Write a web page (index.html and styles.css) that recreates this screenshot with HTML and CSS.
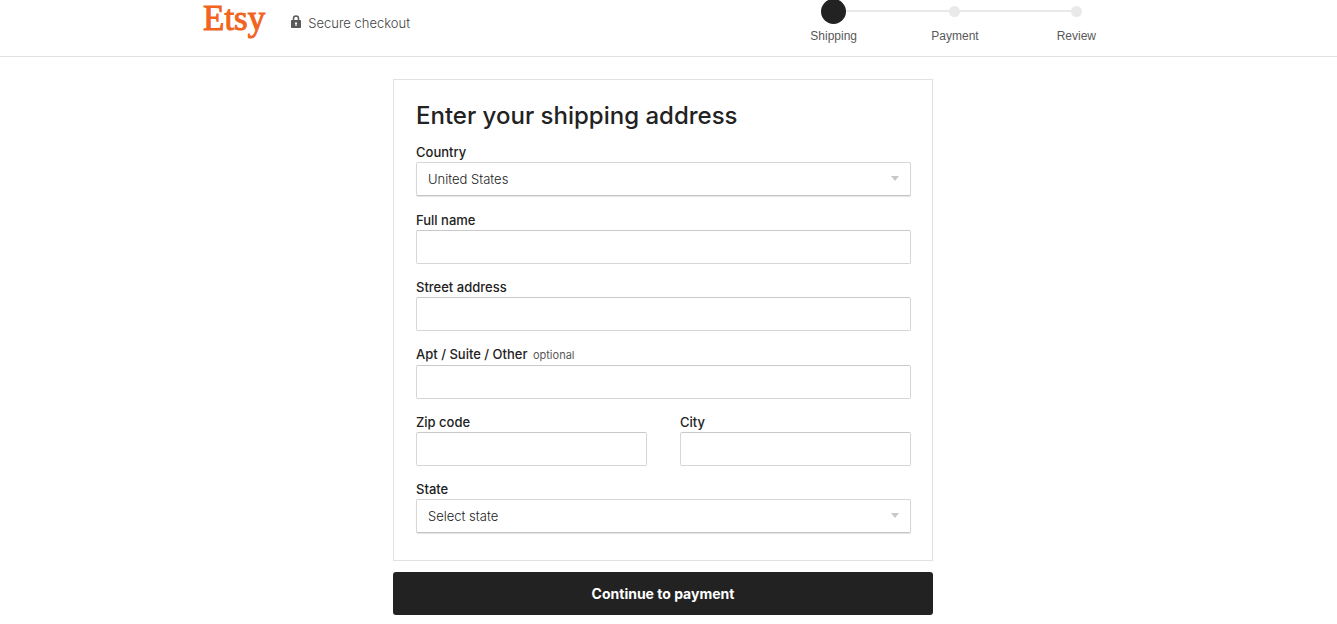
FILE: index.html
```html
<!DOCTYPE html>
<html lang="en">
<head>
    <meta charset="UTF-8">
    <meta name="viewport" content="width=device-width, initial-scale=1.0">
    <title>Etsy - Secure checkout</title>
    <link rel="stylesheet" href="styles.css">
</head>
<body>

<header class="site-header">
    <div class="header-inner">
        <a href="#" class="logo">Etsy</a>
        <div class="secure">
            <svg class="lock" width="10" height="13" viewBox="0 0 10 13" aria-hidden="true">
                <path d="M2.5 6V3.4a2.5 2.5 0 0 1 5 0V6" fill="none" stroke="#595959" stroke-width="1.5"/>
                <path fill="#595959" fill-rule="evenodd" d="M.8 5h8.4a.8.8 0 0 1 .8.8v6.4a.8.8 0 0 1-.8.8H.8a.8.8 0 0 1-.8-.8V5.8A.8.8 0 0 1 .8 5zM5 7.2a1.1 1.1 0 0 0-.6 2V11h1.2V9.2a1.1 1.1 0 0 0-.6-2z"/>
            </svg>
            <span>Secure checkout</span>
        </div>
        <ol class="steps">
            <li class="step active"><span class="dot"></span>Shipping</li>
            <li class="step"><span class="dot"></span>Payment</li>
            <li class="step"><span class="dot"></span>Review</li>
        </ol>
    </div>
</header>

<main class="checkout">
    <form>
        <div class="card">
            <h1>Enter your shipping address</h1>
            <div class="field">
                <label for="country">Country</label>
                <div class="select-wrap">
                    <select id="country">
                        <option>United States</option>
                    </select>
                </div>
            </div>
            <div class="field">
                <label for="name">Full name</label>
                <input type="text" id="name">
            </div>
            <div class="field">
                <label for="street">Street address</label>
                <input type="text" id="street">
            </div>
            <div class="field">
                <label for="apt">Apt / Suite / Other <span class="optional">optional</span></label>
                <input type="text" id="apt">
            </div>
            <div class="field-row">
                <div class="field">
                    <label for="zip">Zip code</label>
                    <input type="text" id="zip">
                </div>
                <div class="field">
                    <label for="city">City</label>
                    <input type="text" id="city">
                </div>
            </div>
            <div class="field">
                <label for="state">State</label>
                <div class="select-wrap">
                    <select id="state">
                        <option>Select state</option>
                    </select>
                </div>
            </div>
        </div>
        <button type="submit">Continue to payment</button>
    </form>
</main>

</body>
</html>
```
FILE: styles.css
```css
* {
    box-sizing: border-box;
}
body {
    margin: 0;
    font-family: Inter, Arial, sans-serif;
    font-size: 13px;
    color: #222;
    background-color: #fff;
}
.site-header {
    border-bottom: 1px solid #e1e1df;
    padding-right: 11px;
}
.header-inner {
    display: flex;
    align-items: flex-start;
    max-width: 948px;
    height: 56px;
    margin: 0 auto;
    padding-left: 14px;
}
.logo {
    font-family: "Liberation Serif", Georgia, serif;
    font-size: 35px;
    line-height: 38px;
    color: #f1641e;
    -webkit-text-stroke: 1px #f1641e;
    text-decoration: none;
}
.secure {
    display: flex;
    align-items: center;
    gap: 7px;
    height: 45px;
    margin-left: 26px;
    font-weight: 300;
    color: #444;
}
.lock {
    margin-bottom: 3px;
}
.steps {
    display: flex;
    width: 364px;
    margin: 0 0 0 auto;
    padding: 0;
    list-style: none;
    font-family: "Liberation Sans", Arial, sans-serif;
    font-size: 12px;
    line-height: 16px;
    color: #595959;
}
.step {
    flex: 1;
    display: flex;
    flex-direction: column;
    align-items: center;
    position: relative;
}
.dot {
    width: 11px;
    height: 11px;
    margin: 6px 0 11px;
    border-radius: 50%;
    background-color: #e9e9e9;
}
.active .dot {
    width: 25px;
    height: 25px;
    margin: -1px 0 4px;
    background-color: #222;
    z-index: 1;
}
.step + .step::before {
    content: "";
    position: absolute;
    top: 10px;
    right: 50%;
    width: 100%;
    height: 2px;
    background-color: #e9e9e9;
}
.checkout {
    padding: 22px 11px 9px 0;
}
form {
    max-width: 540px;
    margin: 0 auto;
}
.card {
    border: 1px solid #e1e1df;
    padding: 21px 21px 11px 22px;
}
h1 {
    margin: 0 0 13px;
    font-size: 24px;
    font-weight: 500;
    line-height: 30px;
}
.field {
    margin-bottom: 15px;
}
label {
    display: block;
    margin-bottom: 1px;
    font-weight: 500;
    line-height: 17px;
}
.optional {
    margin-left: 2px;
    font-size: 11px;
    font-weight: 400;
    color: #595959;
}
.field-row {
    display: grid;
    grid-template-columns: 1fr 1fr;
    gap: 33px;
}
input, select {
    display: block;
    width: 100%;
    height: 34px;
    padding: 0 11px;
    border: 1px solid #d6d6d6;
    border-top-color: #c9c9c9;
    border-radius: 2px;
    font-family: inherit;
    font-size: 13px;
    color: #222;
    background-color: #fff;
}
select {
    appearance: none;
    border-color: #d6d6d6;
    border-bottom-color: #c4c4c4;
    box-shadow: 0 1px 1px #e4e4e4;
    font-weight: 300;
}
.select-wrap {
    position: relative;
    padding-bottom: 1px;
}
.select-wrap::after {
    content: "";
    position: absolute;
    top: 14px;
    right: 12px;
    border: 4px solid transparent;
    border-top: 5px solid #c8c8c8;
    border-bottom: 0;
    pointer-events: none;
}
button {
    display: block;
    width: 100%;
    height: 43px;
    margin-top: 11px;
    border: none;
    border-radius: 3px;
    font-family: inherit;
    font-size: 14px;
    font-weight: 700;
    color: #fff;
    background-color: #222;
    cursor: pointer;
}
button:hover {
    background-color: #444;
}
```
